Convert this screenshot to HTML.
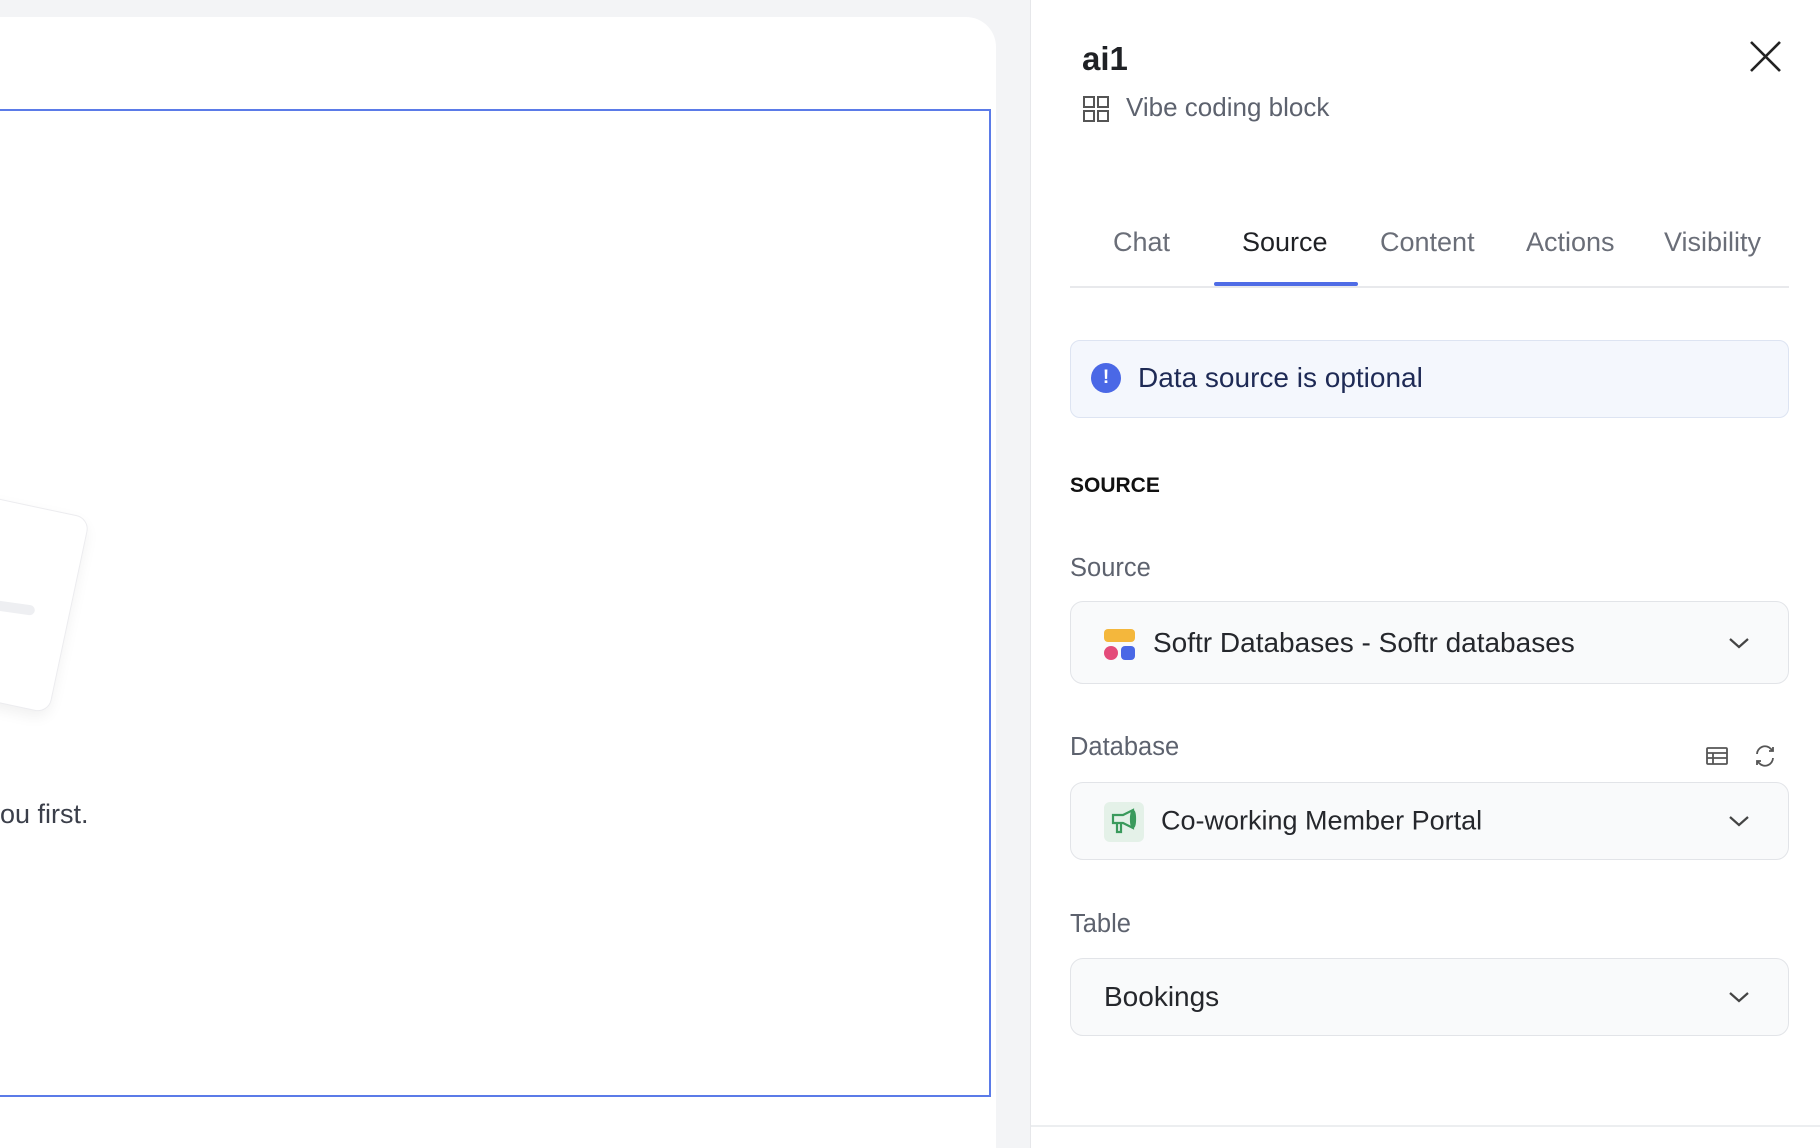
<!DOCTYPE html>
<html style="overflow:hidden"><head><style>
*{box-sizing:border-box;margin:0;padding:0}
html,body{width:1820px;height:1148px;overflow:hidden}
body{background:#f3f4f6;font-family:"Liberation Sans",sans-serif;position:relative}
.abs{position:absolute}
.card{left:-40px;top:17px;width:1036px;height:1131px;background:#fff;border-radius:30px 30px 0 0}
.frame{left:-5px;top:109px;width:996px;height:988px;border:2px solid #5b7be8}
.panel{left:1030px;top:0;width:790px;height:1148px;background:#fff;border-left:1px solid #e6e7ea}
.lbl{color:#5d626e;font-size:25.5px}
.sel{left:1070px;width:719px;background:#f9fafb;border:1.5px solid #e2e4e8;border-radius:13px}
.seltxt{font-size:28px;color:#25272c;position:absolute;top:50%;transform:translateY(-50%)}
.chev{position:absolute;right:37px;top:50%;margin-top:-8px}
.tab{top:227px;font-size:27px;color:#6a6e78}
</style></head><body>
<div class="abs card"></div>
<div class="abs frame"></div>
<div class="abs" style="left:-158px;top:492px;width:230px;height:200px;background:#fff;border:1px solid #ececef;border-radius:14px;transform:rotate(12deg);box-shadow:0 6px 14px rgba(0,0,0,0.06)"></div>
<div class="abs" style="left:-20px;top:602px;width:55px;height:10px;background:#eeeff2;border-radius:5px;transform:rotate(8deg)"></div>
<div class="abs" style="left:0;top:799px;font-size:27px;color:#3b3f4a">ou first.</div>

<div class="abs panel"></div>
<div class="abs" style="left:1082px;top:40px;font-size:33px;font-weight:bold;color:#1f2125">ai1</div>
<svg class="abs" style="left:1082px;top:95px" width="28" height="28" viewBox="0 0 28 28" fill="none" stroke="#555" stroke-width="2"><rect x="2" y="2" width="10" height="10"/><rect x="16" y="2" width="10" height="10"/><rect x="2" y="16" width="10" height="10"/><rect x="16" y="16" width="10" height="10"/></svg>
<div class="abs" style="left:1126px;top:92px;font-size:26px;color:#5d626e">Vibe coding block</div>
<svg class="abs" style="left:1749px;top:40px" width="33" height="33" viewBox="0 0 33 33" stroke="#222" stroke-width="2.6"><path d="M2 2L31 31M31 2L2 31"/></svg>

<div class="abs tab" style="left:1113px">Chat</div>
<div class="abs tab" style="left:1242px;color:#1f2125">Source</div>
<div class="abs tab" style="left:1380px">Content</div>
<div class="abs tab" style="left:1526px">Actions</div>
<div class="abs tab" style="left:1664px">Visibility</div>
<div class="abs" style="left:1070px;top:286px;width:719px;height:2px;background:#e8e9ec"></div>
<div class="abs" style="left:1214px;top:282px;width:144px;height:4px;background:#4f6ce6;border-radius:2px"></div>

<div class="abs" style="left:1070px;top:340px;width:719px;height:78px;background:#f4f7fd;border:1.5px solid #dde4f2;border-radius:10px"></div>
<div class="abs" style="left:1091px;top:363px;width:30px;height:30px;border-radius:50%;background:#4a68e6;color:#fff;font-weight:bold;font-size:19px;text-align:center;line-height:30px">!</div>
<div class="abs" style="left:1138px;top:362px;font-size:28px;color:#1e2a55">Data source is optional</div>

<div class="abs" style="left:1070px;top:474px;font-size:21px;font-weight:bold;color:#111">SOURCE</div>
<div class="abs lbl" style="left:1070px;top:554px">Source</div>
<div class="abs sel" style="top:601px;height:83px">
 <div class="abs" style="left:33px;top:27px;width:31px;height:13px;background:#f4b73c;border-radius:4px"></div>
 <div class="abs" style="left:33px;top:44px;width:14px;height:14px;background:#e44b7a;border-radius:50%"></div>
 <div class="abs" style="left:50px;top:44px;width:14px;height:14px;background:#4a68e6;border-radius:4px"></div>
 <div class="seltxt" style="left:82px">Softr Databases - Softr databases</div>
 <svg class="chev" width="24" height="16" viewBox="0 0 24 16" fill="none" stroke="#444" stroke-width="2.2"><path d="M3 4l9 8 9-8"/></svg>
</div>

<div class="abs lbl" style="left:1070px;top:733px">Database</div>
<svg class="abs" style="left:1705px;top:746px" width="24" height="20" viewBox="0 0 24 20" fill="none" stroke="#555" stroke-width="1.8"><rect x="2" y="2" width="20" height="16" rx="1"/><path d="M2 7h20M2 12h20M8 7v11"/></svg>
<svg class="abs" style="left:1753px;top:743px" width="24" height="26" viewBox="0 0 24 26" fill="none" stroke="#555" stroke-width="1.8"><path d="M4 11a8 8 0 0 1 14-5l2 2M20 4v4h-4M20 15a8 8 0 0 1-14 5l-2-2M4 22v-4h4"/></svg>
<div class="abs sel" style="top:782px;height:78px">
 <div class="abs" style="left:33px;top:19px;width:40px;height:40px;background:#e4f1e8;border-radius:6px"></div>
 <svg class="abs" style="left:38px;top:24px" width="30" height="30" viewBox="0 0 30 30" fill="none" stroke="#3a9a5c" stroke-width="2.2"><path d="M4 8h10l10-5v18l-10-5H4z"/><ellipse cx="24" cy="12" rx="2" ry="8"/><path d="M8 16v9h4v-9"/></svg>
 <div class="seltxt" style="left:90px;font-size:27px">Co-working Member Portal</div>
 <svg class="chev" width="24" height="16" viewBox="0 0 24 16" fill="none" stroke="#444" stroke-width="2.2"><path d="M3 4l9 8 9-8"/></svg>
</div>

<div class="abs lbl" style="left:1070px;top:910px">Table</div>
<div class="abs sel" style="top:958px;height:78px">
 <div class="seltxt" style="left:33px">Bookings</div>
 <svg class="chev" width="24" height="16" viewBox="0 0 24 16" fill="none" stroke="#444" stroke-width="2.2"><path d="M3 4l9 8 9-8"/></svg>
</div>
<div class="abs" style="left:1031px;top:1125px;width:789px;height:2px;background:#eceef0"></div>
</body></html>
